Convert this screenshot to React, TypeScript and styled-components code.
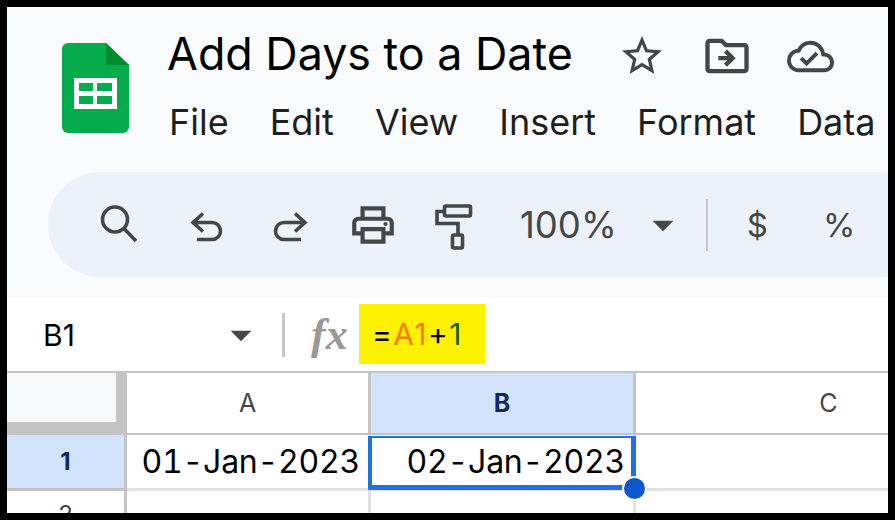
import styled, { createGlobalStyle } from "styled-components";
import {
  MdArrowDropDown,
  MdOutlineCloudDone,
  MdOutlineDriveFileMove,
  MdOutlinePrint,
  MdStarBorder,
} from "react-icons/md";

const GlobalStyle = createGlobalStyle`
  html, body {
    margin: 0;
    padding: 0;
    background: #000;
  }
`;

const Frame = styled.div`
  width: 895px;
  height: 520px;
  box-sizing: border-box;
  border: 7px solid #000;
  background: #fff;
  overflow: hidden;
  font-family: "Inter", "Liberation Sans", sans-serif;
`;

const Chrome = styled.div`
  background: #f9fbfd;
  padding-bottom: 21px;
`;

const TitleBar = styled.div`
  height: 165px;
  box-sizing: border-box;
  padding: 36px 0 0 55px;
  display: flex;
  align-items: flex-start;
`;

const TitleColumn = styled.div`
  margin-left: 38px;
`;

const TitleRow = styled.div`
  display: flex;
  align-items: center;
  height: 48px;
  margin-top: -11px;
`;

const DocTitle = styled.div`
  font-size: 44.8px;
  margin-top: -4px;
  color: #000;
  white-space: nowrap;
  width: 430px;
`;

const TitleIcon = styled.span<{ $ml: number; $size: number }>`
  display: flex;
  margin-left: ${(p) => p.$ml}px;
  color: #444746;
  font-size: ${(p) => p.$size}px;
`;

const MenuRow = styled.div`
  display: flex;
  gap: 41px;
  margin-top: 20px;
  margin-left: 2px;
  font-size: 36px;
  color: #1f1f1f;
  white-space: nowrap;
`;

const Toolbar = styled.div`
  margin-left: 41px;
  height: 105px;
  background: #edf2fa;
  border-radius: 52px 0 0 52px;
  display: flex;
  align-items: center;
  padding-left: 46px;
  color: #444746;
`;

const ToolIcon = styled.span<{ $ml?: number }>`
  display: flex;
  justify-content: center;
  width: 50px;
  font-size: 50px;
  margin-left: ${(p) => p.$ml ?? 0}px;
`;

const ZoomLabel = styled.span`
  font-size: 36.5px;
  margin-left: 42px;
`;

const ToolDivider = styled.span`
  width: 2px;
  height: 52px;
  background: #c7c7c7;
  margin-left: 18px;
`;

const ToolText = styled.span<{ $ml: number }>`
  font-size: 33px;
  margin-left: ${(p) => p.$ml}px;
`;

const FormulaBar = styled.div`
  height: 73px;
  display: flex;
  align-items: center;
  background: #fff;
  padding-left: 36px;
  color: #444746;
`;

const NameBox = styled.div`
  font-size: 30px;
  color: #000;
  width: 173px;
`;

const BarDivider = styled.span`
  width: 3px;
  height: 44px;
  background: #c7c7c7;
  margin-left: 16px;
`;

const FxLabel = styled.span`
  font-family: "Liberation Serif", serif;
  font-style: italic;
  font-weight: 700;
  font-size: 44px;
  color: #999;
  margin-left: 26px;
  width: 48px;
`;

const FormulaBox = styled.div`
  height: 60px;
  width: 126px;
  margin-bottom: 1px;
  box-sizing: border-box;
  padding-left: 13px;
  display: flex;
  align-items: center;
  background: #fff200;
  font-size: 30px;
  letter-spacing: 1.4px;
  color: #000;
`;

const Ref = styled.span<{ $color: string }>`
  color: ${(p) => p.$color};
`;

const Sheet = styled.div`
  border-top: 2px solid #c4c4c4;
  display: grid;
  grid-template-columns: 120px 244px 265px 388px;
  grid-template-rows: 62px 56px 50px;
`;

const Corner = styled.div`
  background: #f8f9fa;
  border-right: 11px solid #c4c4c4;
  border-bottom: 13px solid #c4c4c4;
`;

const ColumnHeader = styled.div<{ $active?: boolean }>`
  display: flex;
  align-items: center;
  justify-content: center;
  border-right: 3px solid #c4c4c4;
  border-bottom: 2px solid #c4c4c4;
  background: ${(p) => (p.$active ? "#d3e3fd" : "#fff")};
  color: ${(p) => (p.$active ? "#0b2a66" : "#444746")};
  font-size: 25px;
  font-weight: ${(p) => (p.$active ? 700 : 400)};
`;

const RowHeader = styled.div<{ $active?: boolean }>`
  display: flex;
  align-items: center;
  justify-content: center;
  border-right: 3px solid #c4c4c4;
  border-bottom: 3px solid #c4c4c4;
  background: ${(p) => (p.$active ? "#d3e3fd" : "#fff")};
  color: ${(p) => (p.$active ? "#0b2a66" : "#444746")};
  font-size: 24px;
  font-weight: ${(p) => (p.$active ? 700 : 400)};
`;

const Cell = styled.div`
  position: relative;
  box-sizing: border-box;
  display: flex;
  align-items: center;
  justify-content: flex-end;
  padding-right: 8px;
  border-right: 3px solid #e0e0e0;
  border-bottom: 3px solid #e0e0e0;
  font-size: 32px;
  font-variant-numeric: tabular-nums;
  letter-spacing: -0.25px;
  color: #000;
  white-space: nowrap;
`;

const Selection = styled.div`
  position: absolute;
  z-index: 1;
  inset: 1px -3px -2px -3px;
  border-style: solid;
  border-color: #1a73e8;
  border-width: 2px 5px 5px 4px;
  pointer-events: none;
`;

const Handle = styled.div`
  position: absolute;
  z-index: 2;
  right: -14px;
  bottom: -13px;
  width: 21px;
  height: 21px;
  border-radius: 50%;
  background: #0b57d0;
  border: 2px solid #fff;
`;

const SheetsLogo = () => (
  <svg width="67" height="90" viewBox="0 0 67 90">
    <path
      d="M6 0H44L67 22V84a6 6 0 0 1-6 6H6a6 6 0 0 1-6-6V6a6 6 0 0 1 6-6Z"
      fill="#06ab4c"
    />
    <path d="M44 0L67 22H44Z" fill="#018a2f" />
    <path
      d="M12 35H55V66H12ZM17 40V48H31V40ZM35 40V48H50V40ZM17 53V61H31V53ZM35 53V61H50V53Z"
      fill="#fff"
      fillRule="evenodd"
    />
  </svg>
);

// toolbar glyphs, drawn on a 50px box to match the slot
const StrokeIcon = ({ children }: { children: React.ReactNode }) => (
  <svg
    width="50"
    height="50"
    viewBox="0 0 50 50"
    fill="none"
    stroke="currentColor"
    strokeWidth="3.6"
  >
    {children}
  </svg>
);

const SearchIcon = () => (
  <StrokeIcon>
    <circle cx="21" cy="19.5" r="12.5" />
    <path d="M30 28.5L42 41" />
  </StrokeIcon>
);

const UndoIcon = () => (
  <StrokeIcon>
    <path d="M20 13.5L10 22.5L20 31.5M11 22.5H29a8.5 8.5 0 0 1 0 17H14" />
  </StrokeIcon>
);

const RedoIcon = () => (
  <StrokeIcon>
    <path d="M30 13.5L40 22.5L30 31.5M39 22.5H19a8.5 8.5 0 0 0 0 17H36" />
  </StrokeIcon>
);

const RollerIcon = () => (
  <StrokeIcon>
    <rect x="16.5" y="6" width="26" height="10" rx="1.5" />
    <path d="M16 11.5H9V23.5H30V35" />
    <rect x="24.5" y="35" width="10" height="13" rx="1.5" />
  </StrokeIcon>
);

const App = () => {
  return (
    <Frame>
      <GlobalStyle />
      <Chrome>
        <TitleBar>
          <SheetsLogo />
          <TitleColumn>
            <TitleRow>
              <DocTitle>Add Days to a Date</DocTitle>
              <TitleIcon $ml={21} $size={48}>
                <MdStarBorder />
              </TitleIcon>
              <TitleIcon $ml={35} $size={52}>
                <MdOutlineDriveFileMove />
              </TitleIcon>
              <TitleIcon $ml={34} $size={47}>
                <MdOutlineCloudDone />
              </TitleIcon>
            </TitleRow>
            <MenuRow>
              <span>File</span>
              <span>Edit</span>
              <span>View</span>
              <span>Insert</span>
              <span>Format</span>
              <span>Data</span>
            </MenuRow>
          </TitleColumn>
        </TitleBar>
        <Toolbar>
          <ToolIcon>
            <SearchIcon />
          </ToolIcon>
          <ToolIcon $ml={39}>
            <UndoIcon />
          </ToolIcon>
          <ToolIcon $ml={32}>
            <RedoIcon />
          </ToolIcon>
          <ToolIcon $ml={33}>
            <MdOutlinePrint />
          </ToolIcon>
          <ToolIcon $ml={30}>
            <RollerIcon />
          </ToolIcon>
          <ZoomLabel>100%</ZoomLabel>
          <ToolIcon $ml={21}>
            <MdArrowDropDown />
          </ToolIcon>
          <ToolDivider />
          <ToolText $ml={39}>$</ToolText>
          <ToolText $ml={55}>%</ToolText>
        </Toolbar>
      </Chrome>
      <FormulaBar>
        <NameBox>B1</NameBox>
        <ToolIcon>
          <MdArrowDropDown />
        </ToolIcon>
        <BarDivider />
        <FxLabel>fx</FxLabel>
        <FormulaBox>
          =<Ref $color="#f57c00">A1</Ref>+<Ref $color="#1b5e00">1</Ref>
        </FormulaBox>
      </FormulaBar>
      <Sheet>
        <Corner />
        <ColumnHeader>A</ColumnHeader>
        <ColumnHeader $active>B</ColumnHeader>
        <ColumnHeader>C</ColumnHeader>
        <RowHeader $active>1</RowHeader>
        <Cell>01-Jan-2023</Cell>
        <Cell>
          02-Jan-2023
          <Selection />
          <Handle />
        </Cell>
        <Cell />
        <RowHeader>2</RowHeader>
        <Cell />
        <Cell />
        <Cell />
      </Sheet>
    </Frame>
  );
};

export default App;
